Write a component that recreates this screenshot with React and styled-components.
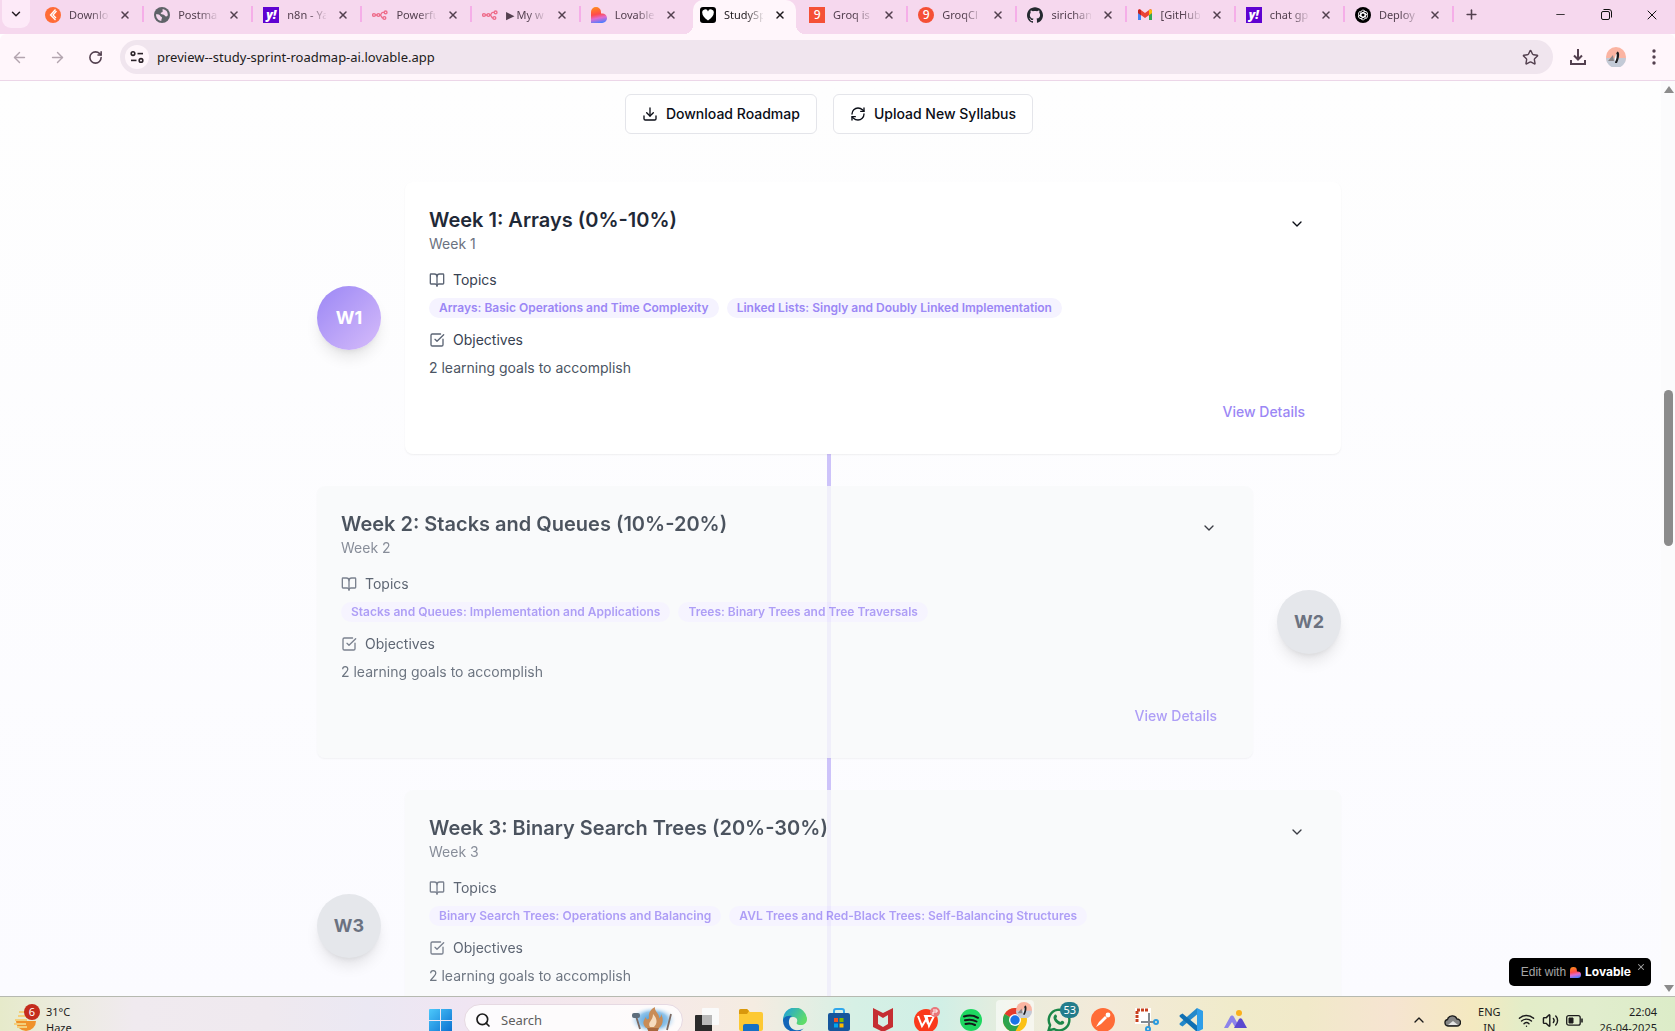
import React from 'react';
import styled, { createGlobalStyle, css } from 'styled-components';
import {
  ArrowLeft, ArrowRight, RotateCw, ChevronDown, ChevronUp, X, Plus, Minus, Star, Download,
  RefreshCw, BookOpen, SquareCheckBig, Search, Wifi, Volume2,
} from 'lucide-react';
import { SiGithub } from 'react-icons/si';

const ui = '"Noto Sans", "Open Sans", sans-serif';
const body = 'Inter, "Open Sans", sans-serif';

const Global = createGlobalStyle`
  *, *::before, *::after { box-sizing: border-box; }
  body { margin: 0; font-family: ${body}; }
  button { font: inherit; color: inherit; border: 0; padding: 0; background: none; cursor: pointer; }
  h3, p { margin: 0; }
  svg { display: block; flex: none; }
`;

const Screen = styled.div`
  height: 100vh;
  display: grid;
  grid-template-columns: minmax(0, 1fr);
  grid-template-rows: 34px 47px minmax(0, 1fr) 35px;
  overflow: hidden;
`;

/* ---------- browser tabs ---------- */
const TabStrip = styled.header`
  display: flex;
  background: #f6d8ee;
  color: #53404f;
  font: 11px/16px ${ui};
`;
const TabSearch = styled.button`
  width: 28px;
  height: 28px;
  margin: 0 5px 0 2px;
  display: grid;
  place-items: center;
  border-radius: 0 0 9px 9px;
  background: #fdeaf8;
  color: #241c22;
`;
const TabList = styled.div`
  flex: 1;
  min-width: 0;
  display: flex;
`;
const Tab = styled.div`
  flex: 1;
  min-width: 0;
  height: 34px;
  padding: 0 10px 5px;
  display: flex;
  align-items: center;
  gap: 8px;
  position: relative;
  ${p => p.$line && css`
    background: linear-gradient(#f5aee8, #f5aee8) right 0 top 6px / 2px 16px no-repeat;
  `}
  ${p => p.$active && css`
    color: #1f1a1e;
    &::before {
      content: '';
      position: absolute;
      inset: 0 3px;
      border-radius: 10px 10px 0 0;
      background: #fff6fb;
    }
    &::after {
      content: '';
      position: absolute;
      inset: auto -6px 0;
      height: 9px;
      background:
        radial-gradient(circle at 0 0, #f6d8ee 9px, #fff6fb 9px) left / 9px 9px no-repeat,
        radial-gradient(circle at 100% 0, #f6d8ee 9px, #fff6fb 9px) right / 9px 9px no-repeat;
    }
    & > * { position: relative; z-index: 1; }
  `}
`;
const TabTitle = styled.span`
  flex: 1;
  min-width: 0;
  white-space: nowrap;
  mask-image: linear-gradient(90deg, #000 55%, transparent 105%);
`;
const TabClose = styled.button`
  width: 18px;
  height: 18px;
  display: grid;
  place-items: center;
`;
const NewTab = styled.button`
  width: 34px;
  height: 29px;
  margin-right: 49px;
  display: grid;
  place-items: center;
`;
const WindowButton = styled.button`
  width: 46px;
  height: 29px;
  display: grid;
  place-items: center;
  color: #111;
`;
const Favicon = styled.span`
  flex: none;
  width: 16px;
  height: 16px;
  display: grid;
  place-items: center;
  overflow: hidden;
  border-radius: ${p => (p.$round ? '50%' : p.$soft ? '3px' : '0')};
  background: ${p => p.$bg || 'none'};
  color: #fff;
  font: ${p => (p.$italic ? 'italic 900' : '500')} 12px/16px ${ui};
`;

/* ---------- address bar ---------- */
const Toolbar = styled.div`
  display: flex;
  align-items: center;
  padding-right: 2px;
  background: #fff6fb;
  border-bottom: 1px solid #ecd6e8;
  border-radius: 6px 6px 0 0;
  color: #53404f;
`;
const NavButton = styled.button`
  width: 38px;
  height: 34px;
  display: grid;
  place-items: center;
  color: ${p => (p.$off ? '#b3a5af' : '#53404f')};
`;
const Address = styled.div`
  flex: 1;
  height: 34px;
  margin: 0 6px;
  padding: 0 14px 0 5px;
  display: flex;
  align-items: center;
  gap: 8px;
  border-radius: 17px;
  background: #f0e5ee;
`;
const SiteInfo = styled.button`
  width: 24px;
  height: 24px;
  display: grid;
  place-items: center;
  border-radius: 50%;
  background: #fff6fb;
  color: #2a2228;
`;
const Url = styled.input`
  flex: 1;
  min-width: 0;
  padding: 0;
  border: 0;
  outline: 0;
  background: none;
  color: #211b20;
  font: 13px/20px ${ui};
`;

/* ---------- page ---------- */
const Viewport = styled.div`
  position: relative;
  display: flex;
  min-height: 0;
  overflow: hidden;
  background: linear-gradient(#fefefe, #fbfbff);
`;
const Page = styled.main`
  flex: 1;
  min-width: 0;
  padding: 13px 16px 0;
  overflow: hidden;
`;
const Actions = styled.div`
  display: flex;
  justify-content: center;
  gap: 16px;
  margin-bottom: 48px;
`;
const OutlineButton = styled.button`
  height: 40px;
  padding: 0 16px;
  display: flex;
  align-items: center;
  gap: 8px;
  border: 1px solid #e4e5ea;
  border-radius: 6px;
  background: #fff;
  color: #0a0d16;
  font: 500 14px/20px ${body};
`;
const Timeline = styled.div`
  position: relative;
  max-width: 1024px;
  margin: 0 auto;
  display: flex;
  flex-direction: column;
  gap: 32px;
  &::before {
    content: '';
    position: absolute;
    top: 0;
    bottom: 0;
    left: calc(50% - 2px);
    width: 4px;
    background: #cdc3fa;
  }
`;
const WeekRow = styled.section`
  position: relative;
  display: flex;
  flex-direction: ${p => (p.$flip ? 'row-reverse' : 'row')};
  align-items: center;
  gap: 24px;
`;
const Marker = styled.div`
  flex: none;
  width: 64px;
  height: 64px;
  display: grid;
  place-items: center;
  border-radius: 50%;
  background: ${p => (p.$current ? 'linear-gradient(135deg, #9b87f5, #d6bcfa)' : '#e5e7eb')};
  color: ${p => (p.$current ? '#fff' : '#6b7280')};
  font: 700 18px/28px ${body};
  box-shadow: 0 10px 15px -3px rgba(0, 0, 0, 0.1), 0 4px 6px -4px rgba(0, 0, 0, 0.1);
`;
const Card = styled.article`
  flex: 1;
  min-width: 0;
  padding: 24px;
  display: flex;
  flex-direction: column;
  border-radius: 8px;
  background: ${p => (p.$current ? '#fff' : '#f9fafb')};
  opacity: ${p => (p.$current ? 1 : 0.8)};
  box-shadow: 0 1px 2px rgba(0, 0, 0, 0.06);
`;
const CardHead = styled.div`
  display: flex;
  justify-content: space-between;
  align-items: flex-start;
  margin-bottom: 16px;
`;
const Title = styled.h3`
  color: #1f2937;
  font: 600 20px/28px ${body};
`;
const Sub = styled.p`
  color: #6b7280;
  font: 14px/20px ${body};
`;
const GhostButton = styled.button`
  height: 36px;
  padding: 0 12px;
  display: grid;
  place-items: center;
  color: ${p => (p.$accent ? '#9b87f5' : '#0a0d16')};
  font: 500 14px/20px ${body};
  align-self: ${p => (p.$accent ? 'flex-end' : 'auto')};
`;
const Label = styled.div`
  display: flex;
  align-items: center;
  gap: 8px;
  margin-bottom: 8px;
  color: #374151;
  font: 14px/20px ${body};
  svg { color: #5b6474; }
`;
const Badges = styled.div`
  display: flex;
  flex-wrap: wrap;
  gap: 8px;
  margin-bottom: 12px;
`;
const Badge = styled.span`
  padding: 2px 10px;
  border-radius: 10px;
  background: #f5f3ff;
  color: #9b87f5;
  font: 600 12px/16px ${body};
`;
const Goals = styled.p`
  margin-bottom: 16px;
  color: #4b5563;
  font: 14px/20px ${body};
`;

const ScrollTrack = styled.div`
  width: 17px;
  padding: 5px 0 4px 4px;
  display: flex;
  flex-direction: column;
  align-items: center;
  background: linear-gradient(90deg, transparent 3px, #fbfbfc 3px);
`;
const ScrollArrow = styled.span`
  border: 5px solid transparent;
  border-top-width: ${p => (p.$down ? '7px' : '0')};
  border-bottom-width: ${p => (p.$down ? '0' : '7px')};
  border-${p => (p.$down ? 'top' : 'bottom')}-color: #8b8b8b;
`;
const ScrollSpace = styled.span`
  flex: ${p => p.$grow};
`;
const Thumb = styled.span`
  flex: 155;
  width: 9px;
  border-radius: 5px;
  background: #8b8b8b;
`;
const EditBadge = styled.aside`
  position: absolute;
  right: 24px;
  bottom: 10px;
  height: 28px;
  padding: 0 4px 0 12px;
  display: flex;
  align-items: center;
  gap: 4px;
  border-radius: 5px;
  background: #000;
  color: #a6a6a6;
  font: 12px/16px "Liberation Sans", sans-serif;
  strong { color: #fff; font: 700 12px/16px ${body}; }
`;
const EditClose = styled.button`
  align-self: flex-start;
  margin: 3px 0 0 0;
  padding: 1px;
`;

/* ---------- taskbar ---------- */
const Taskbar = styled.footer`
  overflow: hidden;
  border-top: 1px solid #b6b9b0;
  background: linear-gradient(90deg, #e6eaca 0, #ecebe0 4%, #f0eaef 8%, #efe9ef 16%, #ebe8f3 22%, #f0e5f2 28%,
    #f6e9ea 38%, #f5ece1 45%, #d6f0e5 51%, #d0efe6 56%, #ebecdc 61%, #f3ead9 66%, #f0ebca 74%, #f1e9c9 78%,
    #f6e4d1 83%, #f4e9c0 88%, #e3edc8 91%, #e1edcd 95%, #dcecc8 100%);
  color: #1c1c1c;
  font: 11px/16px ${ui};
`;
const TaskRow = styled.div`
  height: 46px;
  display: grid;
  grid-template-columns: minmax(0, 1fr) auto minmax(0, 1fr);
  align-items: center;
`;
const Weather = styled.div`
  display: flex;
  align-items: center;
  gap: 8px;
  padding-left: 14px;
`;
const WeatherIcon = styled.span`
  position: relative;
`;
const Count = styled.span`
  position: absolute;
  top: ${p => p.$top}px;
  right: ${p => p.$right}px;
  min-width: 16px;
  height: 16px;
  padding: 0 3px;
  border-radius: 8px;
  background: ${p => p.$bg};
  color: #fff;
  text-align: center;
  font: 11px/16px ${ui};
`;
const Stack = styled.div`
  text-align: ${p => p.$align || 'left'};
`;
const Apps = styled.nav`
  display: flex;
  align-items: center;
`;
const App44 = styled.button`
  position: relative;
  width: 44px;
  height: 40px;
  display: grid;
  place-items: center;
`;
const AppTile = styled.span`
  width: 38px;
  height: 40px;
  display: grid;
  place-items: center;
  border-radius: 4px;
  background: ${p => (p.$open ? 'rgba(255, 255, 255, 0.55)' : 'none')};
`;
const AvatarBadge = styled.span`
  position: absolute;
  top: 2px;
  right: 5px;
`;
const SearchBox = styled.label`
  width: 219px;
  height: 32px;
  margin: 0 2px;
  padding: 0 4px 0 10px;
  display: flex;
  align-items: center;
  gap: 10px;
  border: 1px solid #e6d9e2;
  border-radius: 16px;
  background: rgba(255, 255, 255, 0.82);
  input {
    flex: 1;
    min-width: 0;
    padding: 0;
    border: 0;
    background: none;
    font: 13px/20px ${ui};
  }
  input::placeholder { color: #5e5e5e; opacity: 1; }
`;
const Tray = styled.div`
  justify-self: end;
  display: flex;
  align-items: center;
  gap: 17px;
  padding-right: 18px;
`;
const Status = styled.div`
  display: flex;
  align-items: center;
  gap: 7px;
`;

/* ---------- drawings ---------- */
const Heart = ({ size = 16, id }) => (
  <svg width={size} height={size} viewBox="0 0 16 16" aria-hidden="true">
    <defs>
      <linearGradient id={id} x1="0.3" y1="0" x2="0.5" y2="1">
        <stop offset="0" stopColor="#ff8a1c" />
        <stop offset="0.45" stopColor="#ff4b4b" />
        <stop offset="0.7" stopColor="#e06bd0" />
        <stop offset="1" stopColor="#4f7dff" />
      </linearGradient>
    </defs>
    <path d="M0 5a5 5 0 0 1 10 0v1.4h1.2a4.8 4.8 0 0 1 0 9.6H0z" fill={`url(#${id})`} />
  </svg>
);
const N8n = () => (
  <svg width="16" height="16" viewBox="0 0 16 16" fill="none" stroke="#ee6d8b" strokeWidth="1.4" aria-hidden="true">
    <circle cx="2" cy="8" r="1.4" /><circle cx="6.4" cy="8" r="1.4" />
    <circle cx="13.6" cy="5.4" r="1.4" /><circle cx="12.4" cy="11" r="1.4" />
    <path d="M3.4 8H5M7.8 8c2 0 1-2.6 3-2.6h1.4M7.8 8c2 0 1.2 3 3.2 3" />
  </svg>
);
const Globe = () => (
  <svg width="16" height="16" viewBox="0 0 16 16" aria-hidden="true">
    <circle cx="8" cy="8" r="8" fill="#5f6368" />
    <path d="M2 7.2c2.2 0 3.7.2 4.2 1.6.3 1 1.6.8 1.8 1.8.2 1-.8 1.5-.6 3.2C4.3 13.5 2 11 2 7.2zM8.6 2.3c-.6 1.2.6 1.4 0 2.4-.5.9-2 .6-1.9 1.7.1 1 2 .6 3.2 1.3 1 .6 1 1.8 2.3 1.7 1 0 1.4-.6 1.6-1.4C13.8 4.5 11.5 2.3 8.6 2.3z" fill="#f6d8ee" />
  </svg>
);
const ApiDog = () => (
  <svg width="16" height="16" viewBox="0 0 16 16" aria-hidden="true">
    <circle cx="8" cy="8" r="8" fill="#ff6c37" />
    <path d="M10.5 2.5 5.5 8l5 5M11.5 4 8 8l3 3" fill="none" stroke="#fff" strokeWidth="1.3" />
  </svg>
);
const WhiteHeart = () => (
  <svg width="12" height="12" viewBox="0 0 12 12" aria-hidden="true">
    <path d="M6 11.5C2 8.5.3 6.5.3 4A2.9 2.9 0 0 1 6 2.6 2.9 2.9 0 0 1 11.7 4c0 2.5-1.7 4.5-5.7 7.5z" fill="#fff" />
  </svg>
);
const Gmail = () => (
  <svg width="16" height="16" viewBox="0 0 16 16" aria-hidden="true">
    <path d="M1 3.5v9.5h3V7z" fill="#4285f4" />
    <path d="M15 3.5v9.5h-3V7z" fill="#34a853" />
    <path d="M1 6V4c0-1.8 1.7-2 2.6-1.3L8 6l4.4-3.3C13.3 2 15 2.2 15 4v2L8 11z" fill="#ea4335" />
    <path d="M12 3v5.200l3-2.200V4c0-1.600-1.700-2-3-1z" fill="#fbbc04" />
    <path d="M1 4v2l3 2.200V3C2.700 2 1 2.400 1 4z" fill="#c5221f" />
  </svg>
);
const Knot = () => (
  <svg width="14" height="14" viewBox="0 0 14 14" fill="none" stroke="#fff" strokeWidth="0.9" aria-hidden="true">
    {[0, 60, 120, 180, 240, 300].map(a => (
      <path key={a} transform={`rotate(${a} 7 7)`} d="M4.800 8V4.200A2.300 2.300 0 0 1 9 3.200M4.800 5.800 7 4.500l2.600 1.500" />
    ))}
  </svg>
);
const Tune = () => (
  <svg width="16" height="16" viewBox="0 0 16 16" fill="none" stroke="currentColor" strokeWidth="1.6" aria-hidden="true">
    <circle cx="4" cy="4.6" r="1.8" /><path d="M8.5 4.6H14" />
    <circle cx="12" cy="11.4" r="1.8" /><path d="M2 11.4h5.5" />
  </svg>
);
const Avatar = ({ size = 20 }) => (
  <svg width={size} height={size} viewBox="0 0 20 20" aria-hidden="true">
    <circle cx="10" cy="10" r="10" fill="#fbb4a2" />
    <path d="M0 11h20a10 10 0 0 1-20 0z" fill="#c3cad6" />
    <path d="M2 14 7 8l1 6z" fill="#8b8587" />
    <path d="M9 16c1-4 0-9 2.500-11.500C14 5 13.500 11 11 16z" fill="#1d1d20" />
    <path d="M9 14.500c-.4-4 .3-6.500 1.600-8 .4 3-.1 6-1.600 8z" fill="#fff" />
  </svg>
);
const Restore = () => (
  <svg width="11" height="11" viewBox="0 0 11 11" fill="none" stroke="currentColor" aria-hidden="true">
    <rect x="0.5" y="2.5" width="8" height="8" rx="1.5" /><path d="M2.5.5H8A2.5 2.5 0 0 1 10.500 3v5.500" />
  </svg>
);
const Dots = () => (
  <svg width="4" height="16" viewBox="0 0 4 16" fill="currentColor" aria-hidden="true">
    <circle cx="2" cy="2" r="1.7" /><circle cx="2" cy="8" r="1.7" /><circle cx="2" cy="14" r="1.7" />
  </svg>
);
const DownloadTray = () => (
  <svg width="18" height="18" viewBox="0 0 18 18" fill="none" stroke="currentColor" strokeWidth="2" aria-hidden="true">
    <path d="M9 1v10M5 7.500l4 4 4-4M2 12v4h14v-4" />
  </svg>
);
const Haze = () => (
  <svg width="24" height="24" viewBox="0 0 24 24" aria-hidden="true">
    <path d="M2 13h20a10 10 0 0 1-20 0z" fill="#f0912a" />
    <path d="M5 4h6M4 8h8M1 12h12M0 16h12M3 19h10" stroke="#f3cf7c" strokeWidth="2" />
  </svg>
);
const WinLogo = () => (
  <svg width="23" height="23" viewBox="0 0 23 23" aria-hidden="true">
    <defs><linearGradient id="win" x1="0" y1="0" x2="1" y2="1"><stop offset="0" stopColor="#4cc9fb" /><stop offset="1" stopColor="#0a6fd0" /></linearGradient></defs>
    <path d="M1 0h10v11H0V1a1 1 0 0 1 1-1zM12 0h10a1 1 0 0 1 1 1v10H12zM0 12h11v11H1a1 1 0 0 1-1-1zM12 12h11v10a1 1 0 0 1-1 1H12z" fill="url(#win)" />
  </svg>
);
const Flame = () => (
  <svg width="50" height="28" viewBox="0 0 50 28" aria-hidden="true">
    <defs><radialGradient id="glow"><stop offset="0" stopColor="#3c93d6" /><stop offset="0.6" stopColor="#8fc3ea" /><stop offset="1" stopColor="#fff" stopOpacity="0" /></radialGradient></defs>
    <ellipse cx="25" cy="14" rx="24" ry="14" fill="url(#glow)" />
    <path d="M18 22c-4-4-3-7 0-11 0 3 2 3 3 1-1-5 2-9 6-11-1 4 5 7 4 11 2-1 2-2 2-4 3 5 2 11-2 14z" fill="#c98c57" />
    <path d="M22 21c-3-5 3-6 3-13 4 4 5 9 1 13z" fill="#f6dcbf" />
    <path d="M19 22h12l-2 5h-8z" fill="#a8683c" />
    <path d="m8 10 4 13M43 8l-4 16" stroke="#7c6a62" strokeWidth="1.8" />
    <rect x="4" y="7" width="8" height="5" rx="2" fill="#5d6d7c" />
  </svg>
);
const TaskView = () => (
  <svg width="24" height="24" viewBox="0 0 24 24" aria-hidden="true">
    <rect x="7" y="0" width="17" height="17" rx="1" fill="#fafafa" /><rect x="0" y="7" width="17" height="17" rx="1" fill="#2b2b2b" /><path d="M7 7h10v10H7z" fill="#b9b9b9" />
  </svg>
);
const Folder = () => (
  <svg width="24" height="24" viewBox="0 0 24 24" aria-hidden="true">
    <path d="M0 3a2 2 0 0 1 2-2h6l3 3h11a2 2 0 0 1 2 2v15a2 2 0 0 1-2 2H2a2 2 0 0 1-2-2z" fill="#fdc934" /><path d="M0 3a2 2 0 0 1 2-2h6l2 2-2 3H0z" fill="#d9980c" /><path d="M4 23v-5a2 2 0 0 1 2-2h12a2 2 0 0 1 2 2v5z" fill="#1670c4" />
  </svg>
);
const Edge = () => (
  <svg width="24" height="24" viewBox="0 0 24 24" aria-hidden="true">
    <defs><linearGradient id="edge" x1="0" y1="0" x2="1" y2="0.5"><stop offset="0" stopColor="#1b9de2" /><stop offset="1" stopColor="#5fdc6a" /></linearGradient></defs>
    <path d="M0 12A12 12 0 0 1 24 11c0 4-3 6-6 6-4 0-5-1-4-3 1-3-1-5-4-5-5 0-8 3-10 5z" fill="url(#edge)" />
    <path d="M0 12c1-4 6-5 9-4-5 3-4 12 3 14 4 1 8-1 9-2A12 12 0 0 1 0 12z" fill="#1266b8" />
  </svg>
);
const Store = () => (
  <svg width="24" height="24" viewBox="0 0 24 24" aria-hidden="true">
    <path d="M7 6V3a2 2 0 0 1 2-2h6a2 2 0 0 1 2 2v3" fill="none" stroke="#2fa7ec" strokeWidth="2" /><rect x="1" y="5" width="22" height="18" rx="2" fill="#15569c" />
    <path d="M7 10h4v4H7z" fill="#f25022" /><path d="M12.500 10h4v4h-4z" fill="#7fba00" /><path d="M7 15.500h4v4H7z" fill="#00a4ef" /><path d="M12.500 15.500h4v4h-4z" fill="#ffb900" />
  </svg>
);
const Shield = () => (
  <svg width="22" height="24" viewBox="0 0 22 24" aria-hidden="true">
    <path d="m1 0 10 5 10-5v19l-10 5-10-5zM6 7v9l5 3 5-3V7l-5 3z" fillRule="evenodd" fill="#c52e32" />
  </svg>
);
const Wps = () => (
  <svg width="26" height="26" viewBox="0 0 26 26" aria-hidden="true">
    <circle cx="12" cy="14" r="12" fill="#fa3a1b" /><path d="m4 9 4 10 5-8 2 8 5-10h-9l3 8" fill="none" stroke="#fff" strokeWidth="2" /><circle cx="21" cy="5" r="5" fill="#e8767a" /><path d="M19 3h4v2h-4v3" fill="none" stroke="#fff" />
  </svg>
);
const Spotify = () => (
  <svg width="22" height="22" viewBox="0 0 22 22" aria-hidden="true">
    <circle cx="11" cy="11" r="11" fill="#1ed760" /><path d="M4 7.500c5-1.500 10-1 14 1.300M5 11.300c4-1.100 8-.8 11.500 1.200M5.500 15c3.500-1 6.500-.6 9.500 1" fill="none" stroke="#14191a" strokeWidth="2" strokeLinecap="round" />
  </svg>
);
const Chrome = () => (
  <svg width="24" height="24" viewBox="0 0 24 24" aria-hidden="true">
    <circle cx="12" cy="12" r="12" fill="#fbc116" /><path d="M12 12 1.600 6a12 12 0 0 1 20.800 0z" fill="#e33b2e" /><path d="M1.600 6A12 12 0 0 0 12 24l5-9-5-3z" fill="#2da44e" /><circle cx="12" cy="12" r="6" fill="#fff" /><circle cx="12" cy="12" r="4.7" fill="#1a73e8" />
  </svg>
);
const WhatsApp = () => (
  <svg width="24" height="24" viewBox="0 0 24 24" fill="none" aria-hidden="true">
    <path d="m1.500 22.500 1.600-5.400A10.300 10.300 0 1 1 7 21z" stroke="#1b8748" strokeWidth="2.4" /><path d="M7.500 7c1-1 2-.5 2.500 1.500.2.800-1 1-.7 1.700 1 2 2.500 3 4 3.600.8.200 1-1.200 1.800-1 2 .6 2.500 1.300 1.900 2.400-2 3-6 1.500-8.300-1C6 11.500 6 8.500 7.500 7z" fill="#1b8748" />
  </svg>
);
const Postman = () => (
  <svg width="24" height="24" viewBox="0 0 24 24" aria-hidden="true">
    <circle cx="12" cy="12" r="12" fill="#ff6c37" /><path d="m5 19 3-5 6-6 2 2-6 6z" fill="#fff" /><circle cx="17" cy="7" r="2.4" fill="#fff" />
  </svg>
);
const Snip = () => (
  <svg width="24" height="24" viewBox="0 0 24 24" fill="none" aria-hidden="true">
    <rect x="0" y="0" width="16" height="16" fill="#fff" /><path d="M2 14V2h11" stroke="#c8401d" strokeWidth="3" strokeDasharray="3 1" /><path d="M6 14h13M14 5v14" stroke="#82898f" strokeWidth="2" /><circle cx="21" cy="14" r="2" stroke="#2a9be0" strokeWidth="2" /><circle cx="13" cy="21" r="2" stroke="#2a9be0" strokeWidth="2" />
  </svg>
);
const VsCode = () => (
  <svg width="24" height="24" viewBox="0 0 24 24" aria-hidden="true">
    <path d="M18 0v6.500L3.500 18.500 1 17q-1-1 0-2z" fill="#2489ca" /><path d="M18 24v-6.500L3.500 5.500 1 7q-1 1 0 2z" fill="#1070b3" /><path d="m18 0 6 3v18l-6 3z" fill="#2f9ee8" />
  </svg>
);
const Peaks = () => (
  <svg width="23" height="22" viewBox="0 0 23 22" aria-hidden="true">
    <circle cx="15" cy="4" r="3" fill="#fbb01b" /><path d="m0 19 6-11c1-2 3-2 4 0l5 9c-1 2-3 2-4 1l-3-5-4 6z" fill="#8d84ea" /><path d="m10 19 5-9c1-1 2-1 3 0l5 9z" fill="#5a49cf" />
  </svg>
);
const Cloud = () => (
  <svg width="17" height="13" viewBox="0 0 17 13" aria-hidden="true">
    <path d="M4 12a3.300 3.300 0 0 1-.5-6.500A5 5 0 0 1 13 5a3.500 3.500 0 0 1 0 7z" fill="#858585" stroke="#1c1c1c" strokeWidth="1.3" /><path d="m4 11 5-4 5 4z" fill="#e6e6e6" />
  </svg>
);
const Battery = () => (
  <svg width="17" height="11" viewBox="0 0 17 11" fill="none" stroke="#1c1c1c" aria-hidden="true">
    <rect x="0.7" y="0.7" width="13.5" height="9.5" rx="2" strokeWidth="1.3" /><path d="M3 3h4v5H3z" fill="#1c1c1c" /><path d="M16 3.500v4" strokeWidth="1.6" />
  </svg>
);

const tabs = [
  ['Downlo', <Favicon key="i"><ApiDog /></Favicon>],
  ['Postma', <Favicon key="i"><Globe /></Favicon>],
  ['n8n - Ya', <Favicon key="i" $bg="#5f01d1" $italic>y!</Favicon>],
  ['Powerfu', <Favicon key="i"><N8n /></Favicon>],
  ['▶ My w', <Favicon key="i"><N8n /></Favicon>],
  ['Lovable', <Favicon key="i"><Heart id="tabHeart" /></Favicon>],
  ['StudySp', <Favicon key="i" $bg="#000" $soft><WhiteHeart /></Favicon>],
  ['Groq is', <Favicon key="i" $bg="#f55036">9</Favicon>],
  ['GroqCl', <Favicon key="i" $bg="#f55036" $round>9</Favicon>],
  ['sirichan', <Favicon key="i"><SiGithub size={16} color="#24292f" /></Favicon>],
  ['[GitHub', <Favicon key="i"><Gmail /></Favicon>],
  ['chat gp', <Favicon key="i" $bg="#5f01d1" $italic>y!</Favicon>],
  ['Deploy', <Favicon key="i" $bg="#000" $round><Knot /></Favicon>],
];
const ACTIVE = 6;

const weeks = [
  { n: 1, title: 'Week 1: Arrays (0%-10%)', topics: ['Arrays: Basic Operations and Time Complexity', 'Linked Lists: Singly and Doubly Linked Implementation'] },
  { n: 2, title: 'Week 2: Stacks and Queues (10%-20%)', topics: ['Stacks and Queues: Implementation and Applications', 'Trees: Binary Trees and Tree Traversals'] },
  { n: 3, title: 'Week 3: Binary Search Trees (20%-30%)', topics: ['Binary Search Trees: Operations and Balancing', 'AVL Trees and Red-Black Trees: Self-Balancing Structures'] },
];

const apps = [
  ['Task view', TaskView], ['File Explorer', Folder], ['Edge', Edge], ['Store', Store], ['McAfee', Shield],
  ['WPS Office', Wps], ['Spotify', Spotify], ['Chrome', Chrome], ['WhatsApp', WhatsApp], ['Postman', Postman],
  ['Snipping Tool', Snip], ['VS Code', VsCode], ['Peaks', Peaks],
];

function Week({ week }) {
  const current = week.n === 1;
  return (
    <WeekRow $flip={week.n % 2 === 0}>
      <Marker $current={current}>W{week.n}</Marker>
      <Card $current={current}>
        <CardHead>
          <div>
            <Title>{week.title}</Title>
            <Sub>Week {week.n}</Sub>
          </div>
          <GhostButton aria-label="Expand week"><ChevronDown size={16} /></GhostButton>
        </CardHead>
        <Label><BookOpen size={16} />Topics</Label>
        <Badges>{week.topics.map(t => <Badge key={t}>{t}</Badge>)}</Badges>
        <Label><SquareCheckBig size={16} />Objectives</Label>
        <Goals>2 learning goals to accomplish</Goals>
        <GhostButton $accent>View Details</GhostButton>
      </Card>
    </WeekRow>
  );
}

export default function App() {
  return (
    <Screen>
      <Global />
      <TabStrip>
        <TabSearch aria-label="Search tabs"><ChevronDown size={14} strokeWidth={2.5} /></TabSearch>
        <TabList>
          {tabs.map(([title, icon], i) => (
            <Tab key={title} $active={i === ACTIVE} $line={i !== ACTIVE && i !== ACTIVE - 1}>
              {icon}
              <TabTitle>{title}</TabTitle>
              <TabClose aria-label="Close tab"><X size={12} strokeWidth={3} /></TabClose>
            </Tab>
          ))}
        </TabList>
        <NewTab aria-label="New tab"><Plus size={15} strokeWidth={2.5} /></NewTab>
        <WindowButton aria-label="Minimize"><Minus size={13} strokeWidth={1.5} /></WindowButton>
        <WindowButton aria-label="Restore"><Restore /></WindowButton>
        <WindowButton aria-label="Close"><X size={16} strokeWidth={1.5} /></WindowButton>
      </TabStrip>

      <Toolbar>
        <NavButton $off aria-label="Back"><ArrowLeft size={17} /></NavButton>
        <NavButton $off aria-label="Forward"><ArrowRight size={17} /></NavButton>
        <NavButton aria-label="Reload"><RotateCw size={15} strokeWidth={2.5} /></NavButton>
        <Address>
          <SiteInfo aria-label="Site information"><Tune /></SiteInfo>
          <Url aria-label="Address" defaultValue="preview--study-sprint-roadmap-ai.lovable.app" />
          <Star size={17} />
        </Address>
        <NavButton aria-label="Downloads"><DownloadTray /></NavButton>
        <NavButton aria-label="Profile"><Avatar /></NavButton>
        <NavButton aria-label="Menu"><Dots /></NavButton>
      </Toolbar>

      <Viewport>
        <Page>
          <Actions>
            <OutlineButton><Download size={16} />Download Roadmap</OutlineButton>
            <OutlineButton><RefreshCw size={16} />Upload New Syllabus</OutlineButton>
          </Actions>
          <Timeline>{weeks.map(w => <Week key={w.n} week={w} />)}</Timeline>
        </Page>
        <ScrollTrack>
          <ScrollArrow />
          <ScrollSpace $grow={297} />
          <Thumb />
          <ScrollSpace $grow={439} />
          <ScrollArrow $down />
        </ScrollTrack>
        <EditBadge>
          Edit with <Heart size={11} id="badgeHeart" /> <strong>Lovable</strong>
          <EditClose aria-label="Dismiss"><X size={10} strokeWidth={2.5} /></EditClose>
        </EditBadge>
      </Viewport>

      <Taskbar>
        <TaskRow>
          <Weather>
            <WeatherIcon><Haze /><Count $bg="#c42b1c" $top={-4} $right={-2}>6</Count></WeatherIcon>
            <Stack><div>31°C</div><div>Haze</div></Stack>
          </Weather>
          <Apps>
            <App44 aria-label="Start"><WinLogo /></App44>
            <SearchBox>
              <Search size={16} strokeWidth={2.5} />
              <input aria-label="Search" placeholder="Search" />
              <Flame />
            </SearchBox>
            {apps.map(([name, Icon]) => (
              <App44 key={name} aria-label={name}>
                <AppTile $open={name === 'Chrome'}><Icon /></AppTile>
                {name === 'Chrome' && <AvatarBadge><Avatar size={16} /></AvatarBadge>}
                {name === 'WhatsApp' && <Count $bg="#227c8c" $top={2} $right={2}>53</Count>}
              </App44>
            ))}
          </Apps>
          <Tray>
            <ChevronUp size={16} />
            <Cloud />
            <Stack $align="center"><div>ENG</div><div>IN</div></Stack>
            <Status>
              <Wifi size={17} />
              <Volume2 size={17} />
              <Battery />
            </Status>
            <Stack $align="right"><div>22:04</div><div>26-04-2025</div></Stack>
          </Tray>
        </TaskRow>
      </Taskbar>
    </Screen>
  );
}
